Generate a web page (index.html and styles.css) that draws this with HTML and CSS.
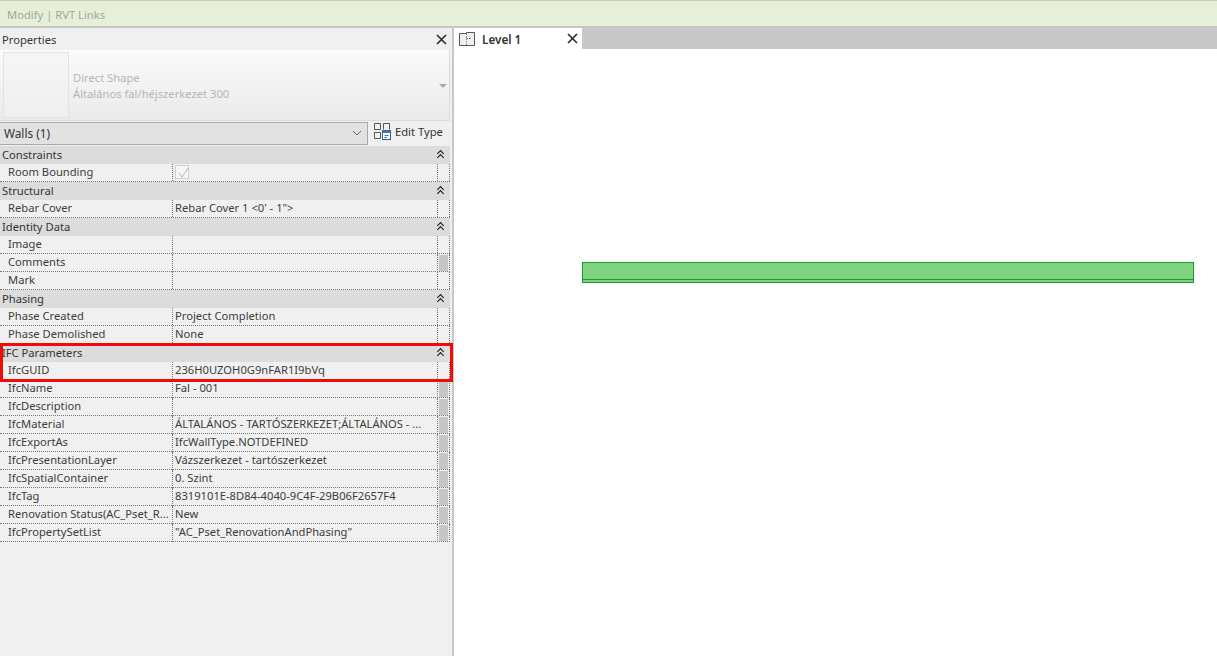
FILE: index.html
```html
<!DOCTYPE html>
<html lang="hu">
<head>
<meta charset="utf-8">
<title>Modify | RVT Links</title>
<link rel="stylesheet" href="styles.css">
</head>
<body>
<header class="ribbon">Modify | RVT Links</header>
<main class="main">
  <aside class="panel">
    <div class="panel-title">
      <span>Properties</span>
      <svg class="close" width="11" height="11" viewBox="0 0 11 11"><path d="M1 1L10 10M10 1L1 10" stroke="#2a2a2a" stroke-width="1.6" fill="none"/></svg>
    </div>
    <div class="preview">
      <div class="thumb"></div>
      <div class="preview-text"><div>Direct Shape</div><div>Általános fal/héjszerkezet 300</div></div>
      <span class="preview-arrow"></span>
    </div>
    <div class="selector">
      <div class="combo">
        <span>Walls (1)</span>
        <svg width="10" height="6" viewBox="0 0 10 6"><path d="M1 1L5 5L9 1" stroke="#666" stroke-width="1" fill="none"/></svg>
      </div>
      <div class="edit-type">
        <svg width="18" height="18" viewBox="0 0 18 18" fill="none"><path d="M1.500 1.500H7.500V7.500H1.500ZM10.500 7.500V1.500H16.500V7.500M1.500 10.500H7.500V16.500H1.500Z" stroke="#555"/><rect x="9.500" y="8.500" width="8" height="9" fill="#fff" stroke="#2f5f8f"/><rect x="9.500" y="8.500" width="8" height="2.500" fill="#3a78b0"/><path d="M11.500 13.500H15.500M11.500 15.500H14" stroke="#3a78b0"/></svg>
        <span>Edit Type</span>
      </div>
    </div>
    <div class="grid">
      <div class="group"><span>Constraints</span><i class="chev"></i></div>
      <div class="row"><div class="k">Room Bounding</div><div class="v"><span class="check"><svg width="12" height="12" viewBox="0 0 12 12"><path d="M2 6L5 10L11 1" stroke="#b4b4b4" fill="none"/></svg></span></div><div class="s"></div></div>
      <div class="group"><span>Structural</span><i class="chev"></i></div>
      <div class="row"><div class="k">Rebar Cover</div><div class="v">Rebar Cover 1 &lt;0' - 1"&gt;</div><div class="s"></div></div>
      <div class="group"><span>Identity Data</span><i class="chev"></i></div>
      <div class="row"><div class="k">Image</div><div class="v"></div><div class="s"></div></div>
      <div class="row"><div class="k">Comments</div><div class="v"></div><div class="s"><b></b></div></div>
      <div class="row"><div class="k">Mark</div><div class="v"></div><div class="s"></div></div>
      <div class="group"><span>Phasing</span><i class="chev"></i></div>
      <div class="row"><div class="k">Phase Created</div><div class="v">Project Completion</div><div class="s"></div></div>
      <div class="row"><div class="k">Phase Demolished</div><div class="v">None</div><div class="s"></div></div>
      <div class="group"><span>IFC Parameters</span><i class="chev"></i></div>
      <div class="row"><div class="k">IfcGUID</div><div class="v">236H0UZOH0G9nFAR1I9bVq</div><div class="s"></div></div>
      <div class="row"><div class="k">IfcName</div><div class="v">Fal - 001</div><div class="s"><b></b></div></div>
      <div class="row"><div class="k">IfcDescription</div><div class="v"></div><div class="s"><b></b></div></div>
      <div class="row"><div class="k">IfcMaterial</div><div class="v">ÁLTALÁNOS - TARTÓSZERKEZET;ÁLTALÁNOS - ...</div><div class="s"><b></b></div></div>
      <div class="row"><div class="k">IfcExportAs</div><div class="v">IfcWallType.NOTDEFINED</div><div class="s"><b></b></div></div>
      <div class="row"><div class="k">IfcPresentationLayer</div><div class="v">Vázszerkezet - tartószerkezet</div><div class="s"><b></b></div></div>
      <div class="row"><div class="k">IfcSpatialContainer</div><div class="v">0. Szint</div><div class="s"><b></b></div></div>
      <div class="row"><div class="k">IfcTag</div><div class="v">8319101E-8D84-4040-9C4F-29B06F2657F4</div><div class="s"><b></b></div></div>
      <div class="row"><div class="k">Renovation Status(AC_Pset_R...</div><div class="v">New</div><div class="s"><b></b></div></div>
      <div class="row"><div class="k">IfcPropertySetList</div><div class="v">"AC_Pset_RenovationAndPhasing"</div><div class="s"><b></b></div></div>
    </div>
    <div class="highlight"></div>
  </aside>
  <section class="view">
    <div class="tabs">
      <div class="tab">
        <svg width="17" height="14" viewBox="0 0 17 14" fill="none"><path d="M0.500 1.500H7.500V0.500H15.500V13.500H0.500Z" fill="#eef0f4" stroke="#555"/><path d="M7.500 1.500V6.500H11.500" stroke="#666" stroke-dasharray="1.500 1"/><path d="M7.500 6.500V13" stroke="#888" stroke-dasharray="1.500 1"/></svg>
        <span class="tab-name">Level 1</span>
        <svg class="tab-close" width="11" height="11" viewBox="0 0 11 11"><path d="M1 1L10 10M10 1L1 10" stroke="#2a2a2a" stroke-width="1.600" fill="none"/></svg>
      </div>
    </div>
    <div class="canvas"><div class="wall"></div></div>
  </section>
</main>
</body>
</html>
```
FILE: styles.css
```css
* { box-sizing: border-box; }
html, body { margin: 0; height: 656px; overflow: hidden; }
body {
  font-family: "Noto Sans", "Open Sans", sans-serif;
  font-size: 11.2px;
  color: #3c3c3c;
  background: #fff;
}
.ribbon {
  height: 28px;
  padding: 6px 0 0 7px;
  line-height: 16px;
  background: #e6efd8;
  border-top: 1px solid #c6cdbc;
  border-bottom: 2px solid #c5c8be;
  color: #a3a69d;
}
.main { display: flex; height: 628px; }
.panel {
  position: relative;
  width: 454px;
  flex: none;
  background: #f0f0f0;
  border-right: 2px solid #c8c8c8;
}
.panel-title {
  height: 22px;
  padding: 1px 5px 0 2px;
  display: flex;
  align-items: center;
  justify-content: space-between;
  color: #333;
}
.preview {
  height: 71px;
  margin-right: 2px;
  display: flex;
  align-items: center;
  position: relative;
  background: linear-gradient(#fbfbfb, #eaeaea);
  border-right: 1px solid #dcdcdc;
  border-bottom: 1px solid #dcdcdc;
}
.thumb {
  width: 66px;
  height: 66px;
  margin: 0 4px 0 3px;
  background: linear-gradient(#f6f6f6, #efefef);
  border: 1px solid #e2e2e2;
  flex: none;
}
.preview-text { color: #b5b5b5; line-height: 16px; margin-top: 1px; }
.preview-arrow {
  position: absolute;
  right: 2px;
  top: 34px;
  border: 4px solid transparent;
  border-top: 4px solid #a8a8a8;
}
.selector {
  height: 25px;
  display: flex;
  align-items: flex-start;
  padding-top: 1px;
}
.combo {
  width: 368px;
  height: 23px;
  padding: 0 5px 1px 4px;
  display: flex;
  align-items: center;
  justify-content: space-between;
  font-size: 11.8px;
  background: #e2e2e2;
  border: 1px solid #a8a8a8;
  border-left: 0;
  color: #333;
}
.edit-type {
  display: flex;
  align-items: center;
  gap: 4px;
  margin: 0 0 0 5px;
  height: 18px;
  color: #333;
}
.grid { width: 450px; }
.group {
  height: 18px;
  padding: 0 0 1px 2px;
  line-height: 16px;
  display: flex;
  align-items: center;
  justify-content: space-between;
  background: #dcdcdc;
  color: #333;
}
.chev {
  width: 12px;
  height: 12px;
  margin-right: 4px;
  position: relative;
}
.chev::before, .chev::after {
  content: "";
  position: absolute;
  left: 4px;
  width: 4px;
  height: 4px;
  border-top: 1.5px solid #111;
  border-left: 1.5px solid #111;
  transform: rotate(45deg);
}
.chev::before { top: 2px; }
.chev::after { top: 6px; }
.row {
  height: 18px;
  display: grid;
  grid-template-columns: 172px 265px 13px;
  border-bottom: 1px dotted #777;
  line-height: 16px;
  white-space: nowrap;
}
.k { padding-left: 8px; overflow: hidden; }
.v { padding-left: 2px; border-left: 1px dotted #777; overflow: hidden; }
.s {
  border-left: 1px dotted #777;
  border-right: 1px dotted #777;
  padding: 1px;
}
.s b { display: block; height: 16px; background: #c6c6c6; }
.check {
  display: block;
  width: 14px;
  height: 14px;
  margin-top: 1px;
  padding: 1px;
  background: #f6f6f6;
  border: 1px solid #d0d0d0;
}
.check svg { display: block; }
.highlight {
  position: absolute;
  left: 0;
  top: 315px;
  width: 453px;
  height: 39px;
  border: 3px solid #ee0b0b;
  z-index: 2;
}
.view { flex: 1; display: flex; flex-direction: column; min-width: 0; }
.tabs { height: 21px; background: #c8c8c8; flex: none; }
.tab {
  width: 128px;
  height: 21px;
  padding: 0 4px 0 5px;
  display: flex;
  align-items: center;
  background: #fff;
}
.tab-name { margin-left: 6px; color: #333; font-weight: 600; font-size: 11.7px; }
.tab-close { margin-left: auto; }
.canvas { position: relative; flex: 1; background: #fff; }
.wall {
  position: absolute;
  left: 128px;
  top: 213px;
  width: 612px;
  height: 21px;
  background: #80d480;
  border: 1px solid #1f9a2f;
}
.wall::after {
  content: "";
  position: absolute;
  left: 0;
  right: 0;
  bottom: 2px;
  height: 1px;
  background: #1f9a2f;
}
```
